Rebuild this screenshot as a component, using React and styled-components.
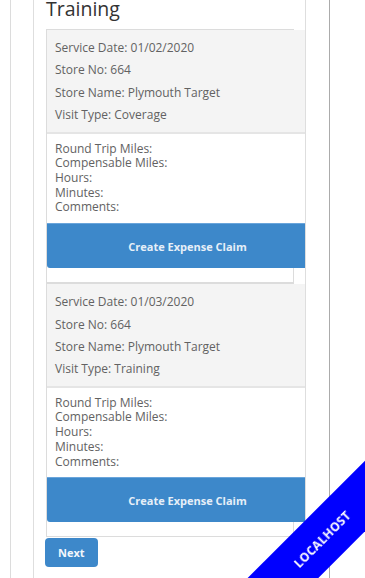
import React from 'react';
import styled, { createGlobalStyle } from 'styled-components';

const GlobalStyle = createGlobalStyle`
  html, body {
    margin: 0;
    padding: 0;
    background: #fff;
  }
  body {
    font-family: "Open Sans", "Liberation Sans", sans-serif;
    overflow: hidden;
  }
`

// outer page frame
const Frame = styled.div`
  box-sizing: border-box;
  margin-left: 10px;
  width: 320px;
  min-height: 100vh;
  padding-left: 22px;
  border-left: 1px solid #dcdcdc;
  border-right: 1px solid #ababab;
  display: flex;
`

// the column that clips the cards
const Panel = styled.div`
  box-sizing: border-box;
  width: 273px;
  padding: 0 12px;
  border-left: 1px solid #dedede;
  border-right: 1px solid #dedede;
  overflow: hidden;
`

const Title = styled.h2`
  margin: -2px 0 9px 0;
  font-size: 19.5px;
  line-height: 22px;
  font-weight: 400;
  color: #333;
`

const Card = styled.div`
  box-sizing: border-box;
  width: 248px;
  border: 1px solid #dcdcdc;
  padding-bottom: 14px;
`

// content runs wider than the card, panel cuts it off
const CardInner = styled.div`
  width: 281px;
`

const CardHeader = styled.div`
  background: #f4f4f4;
  padding: 7px 0 5px 8px;
  border-bottom: 2px solid #e5e5e5;
`

const HeaderLine = styled.div`
  font-size: 12px;
  line-height: 22.4px;
  color: #626262;
  white-space: nowrap;
`

const CardBody = styled.div`
  background: #fff;
  padding: 8px 0 8px 8px;
`

const BodyLine = styled.div`
  font-size: 12px;
  line-height: 14.7px;
  color: #626262;
  white-space: nowrap;
`

const ClaimButton = styled.button`
  display: block;
  width: 100%;
  height: 45px;
  border: none;
  border-top: 1px solid #6aa5db;
  border-radius: 0 0 0 3px;
  background: #3d88ca;
  color: #e6eff8;
  font-family: "Open Sans", sans-serif;
  font-weight: 700;
  font-size: 11px;
  text-align: center;
  padding: 0;
`

const NextButton = styled.button`
  display: block;
  margin: 1px 0 0 -1px;
  height: 29px;
  padding: 0 13px;
  border: none;
  border-radius: 4px;
  background: #3d88ca;
  color: #f2f6fb;
  font-family: "Open Sans", sans-serif;
  font-weight: 700;
  font-size: 11px;
  line-height: 29px;
`

// environment ribbon in the corner
const Ribbon = styled.div`
  position: fixed;
  left: 192px;
  top: 514px;
  width: 260px;
  height: 50px;
  background: #0000ff;
  color: #fff;
  transform: rotate(-45deg);
  display: flex;
  align-items: center;
  justify-content: center;
  font-family: "Open Sans", sans-serif;
  font-weight: 700;
  font-size: 12px;
  letter-spacing: 0.3px;
`

const visits = [
  { date: '01/02/2020', store: '664', name: 'Plymouth Target', type: 'Coverage' },
  { date: '01/03/2020', store: '664', name: 'Plymouth Target', type: 'Training' },
];

const VisitCard = ({ visit }) => (
  <Card>
    <CardInner>
      <CardHeader>
        <HeaderLine>Service Date: {visit.date}</HeaderLine>
        <HeaderLine>Store No: {visit.store}</HeaderLine>
        <HeaderLine>Store Name: {visit.name}</HeaderLine>
        <HeaderLine>Visit Type: {visit.type}</HeaderLine>
      </CardHeader>
      <CardBody>
        <BodyLine>Round Trip Miles:</BodyLine>
        <BodyLine>Compensable Miles:</BodyLine>
        <BodyLine>Hours:</BodyLine>
        <BodyLine>Minutes:</BodyLine>
        <BodyLine>Comments:</BodyLine>
      </CardBody>
      <ClaimButton>Create Expense Claim</ClaimButton>
    </CardInner>
  </Card>
);

const App = () => {
  return (
    <>
      <GlobalStyle />
      <Frame>
        <Panel>
          <Title>Training</Title>
          {visits.map((v) => (
            <VisitCard key={v.date} visit={v} />
          ))}
          <NextButton>Next</NextButton>
        </Panel>
      </Frame>
      <Ribbon>LOCALHOST</Ribbon>
    </>
  );
};

export default App;
